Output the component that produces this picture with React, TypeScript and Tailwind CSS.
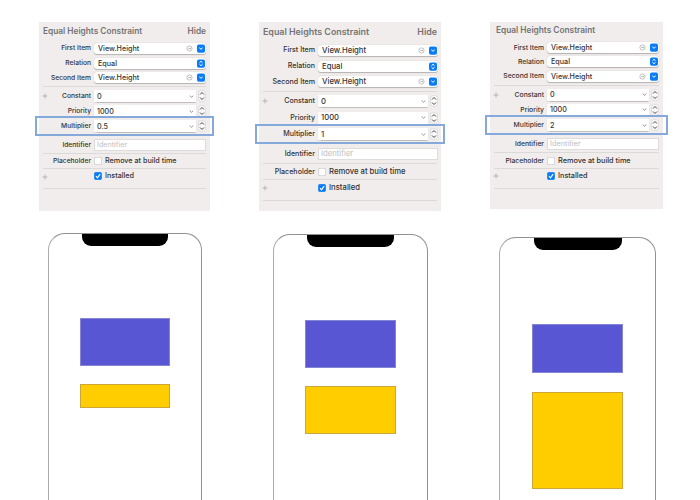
import type { ReactNode } from 'react';

type Theme = {
  panel: string;
  rows: string;
  cols: string;
  title: string;
  label: string;
  check: string;
  value: string;
  highlight: string;
  phone: string;
  notch: string;
  first: string;
  second: string;
  multiplier: string;
  hide: boolean;
};

const examples: Theme[] = [
  {
    panel: 'ml-[39px] w-[171px] h-[189px]',
    rows: 'grid-rows-[18px_16px_14px_15px_3px_16px_14px_16px_19px_1px_14px_1px_14px_5px_1px]',
    cols: 'grid-cols-[52px_112px] gap-x-[3px]',
    title: 'text-[8.3px]',
    label: 'text-[6.7px] pt-[1px]',
    check: 'text-[7.2px]',
    value: 'text-[7.2px] pt-[1px]',
    highlight: '-left-[4px] w-[179px] h-[20px]',
    phone: 'ml-[48px] mt-[22px] w-[154px] h-[267px]',
    notch: 'w-[86px]',
    first: 'mt-[84px] ml-[31px] w-[90px] h-[48px]',
    second: 'mt-[18px] ml-[31px] w-[90px] h-[24px]',
    multiplier: '0.5',
    hide: true,
  },
  {
    panel: 'ml-[19px] w-[182px] h-[189px]',
    rows: 'grid-rows-[20px_16px_16px_15px_4px_16px_17px_16px_21px_1px_15px_1px_15px_5px_1px]',
    cols: 'grid-cols-[56px_120px] gap-x-[3px]',
    title: 'text-[8.9px]',
    label: 'text-[7.1px]',
    check: 'text-[7.7px]',
    value: 'text-[7.7px] pt-[1px]',
    highlight: '-left-[4px] w-[190px] h-[20px]',
    phone: 'ml-[33px] mt-[23px] w-[155px] h-[266px]',
    notch: 'w-[87px]',
    first: 'mt-[85px] ml-[31px] w-[91px] h-[48px]',
    second: 'mt-[18px] ml-[31px] w-[91px] h-[48px]',
    multiplier: '1',
    hide: true,
  },
  {
    panel: 'ml-[20px] w-[173px] h-[187px]',
    rows: 'grid-rows-[18px_15px_13px_16px_2px_17px_13px_18px_18px_1px_15px_1px_13px_6px_1px]',
    cols: 'grid-cols-[54px_112px] gap-x-[3px]',
    title: 'text-[8.3px] -mt-[2px] ml-[2px]',
    label: 'text-[6.8px] pt-[1px]',
    check: 'text-[7.3px]',
    value: 'text-[7.2px] pt-[1px]',
    highlight: '-left-[5px] w-[183px] h-[20px]',
    phone: 'ml-[29px] mt-[28px] w-[157px] h-[263px]',
    notch: 'w-[88px]',
    first: 'mt-[86px] ml-[32px] w-[91px] h-[49px]',
    second: 'mt-[19px] ml-[32px] w-[91px] h-[97px]',
    multiplier: '2',
    hide: false,
  },
];

function Row({ t, label, plus, highlight, pad, children }: { t: Theme; label: string; plus?: boolean; highlight?: boolean; pad?: boolean; children: ReactNode }) {
  return (
    <div className={`relative grid items-center ${t.cols} ${pad ? 'pt-[2px]' : ''}`}>
      <div className={`flex items-center justify-between whitespace-nowrap pl-[3px] font-medium leading-none text-[#343233] ${t.label}`}>
        <span className="w-0">
          {plus && (
            <svg width="6" height="6" viewBox="0 0 6 6" stroke="#aaa7a8" strokeWidth=".8">
              <path d="M3 .5v5M.5 3h5" />
            </svg>
          )}
        </span>
        <span>{label}</span>
      </div>
      <div className="flex items-center">{children}</div>
      {highlight && <div className={`absolute top-1/2 -translate-y-1/2 border-2 border-[#86a9dc] ${t.highlight}`} />}
    </div>
  );
}

function Select({ t, value, stepper }: { t: Theme; value: string; stepper?: boolean }) {
  return (
    <div className="flex h-[11px] w-full items-center rounded-[3px] bg-white pl-[4px] pr-[1px] text-[#353334] shadow-[0_.5px_1px_#00000040]">
      <span className={`flex-1 font-medium leading-none ${t.value}`}>{value}</span>
      {!stepper && (
        <svg className="mr-[4px]" width="7" height="7" viewBox="0 0 7 7" fill="none" stroke="#9b999a" strokeWidth=".6">
          <circle cx="3.5" cy="3.5" r="2.6" />
          <path d="M2.2 3.5h2.6M3.9 2.7l.9.8-.9.8" />
        </svg>
      )}
      <svg width="8" height="9" viewBox="0 0 8 9" fill="none" stroke="white" strokeWidth="1">
        <rect y=".5" width="8" height="8.2" rx="1.8" fill="#0a7cf5" stroke="none" />
        <path d={stepper ? 'M2.5 3.7 4 2.3l1.5 1.4M2.5 5.3 4 6.7l1.5-1.4' : 'M2.3 3.8 4 5.3l1.7-1.5'} />
      </svg>
    </div>
  );
}

function Combo({ t, value }: { t: Theme; value: string }) {
  return (
    <>
      <div className="flex h-[12px] flex-1 items-center bg-white pl-[3px] pr-[2px] text-[#353334] shadow-[0_.5px_1px_#00000033]">
        <span className={`flex-1 font-medium leading-none ${t.value}`}>{value}</span>
        <svg width="5" height="5" viewBox="0 0 5 5" fill="none" stroke="#777" strokeWidth=".8">
          <path d="m.7 1.6 1.8 1.7 1.8-1.7" />
        </svg>
      </div>
      <svg className="ml-[2px]" width="8" height="12" viewBox="0 0 8 12" fill="none" stroke="#454344" strokeWidth="1">
        <rect x=".5" y=".5" width="7" height="11" rx="3" fill="#fbfafa" stroke="#c9c6c7" strokeWidth=".5" />
        <path d="M2 4.5 4 2.5l2 2M2 7.5l2 2 2-2" />
      </svg>
    </>
  );
}

function Check({ t, label, checked }: { t: Theme; label: string; checked?: boolean }) {
  return (
    <div className={`flex items-center gap-[3px] whitespace-nowrap font-medium leading-none text-[#343233] ${t.check}`}>
      <svg width="8" height="8" viewBox="0 0 8 8" fill="none">
        <rect x=".3" y=".3" width="7.4" height="7.4" rx="1.8" fill={checked ? '#0a7cf5' : 'white'} stroke={checked ? '#0a7cf5' : '#bbb8b9'} strokeWidth=".6" />
        {checked && <path d="M2 4.2 3.5 5.8 6.1 2.1" stroke="white" strokeWidth="1.1" />}
      </svg>
      <span>{label}</span>
    </div>
  );
}

const Rule = () => <div className="mx-[4px] h-px self-center bg-[#dcd9d9]" />;

function Inspector({ t }: { t: Theme }) {
  return (
    <section className={`grid content-start bg-[#f0edec] ${t.panel} ${t.rows}`}>
      <div className={`flex items-center justify-between pl-[4px] pr-[4px] font-semibold leading-none text-[#757374] ${t.title}`}>
        <span>Equal Heights Constraint</span>
        {t.hide && <span>Hide</span>}
      </div>
      <Row t={t} label="First Item"><Select t={t} value="View.Height" /></Row>
      <Row t={t} label="Relation"><Select t={t} value="Equal" stepper /></Row>
      <Row t={t} label="Second Item"><Select t={t} value="View.Height" /></Row>
      <Rule />
      <Row t={t} label="Constant" plus><Combo t={t} value="0" /></Row>
      <Row t={t} label="Priority"><Combo t={t} value="1000" /></Row>
      <Row t={t} label="Multiplier" highlight><Combo t={t} value={t.multiplier} /></Row>
      <Row t={t} label="Identifier" pad>
        <div className={`flex h-[12px] w-full items-center border border-[#dedbdb] bg-white pl-[2px] leading-none text-[#c0bebf] ${t.check}`}>Identifier</div>
      </Row>
      <Rule />
      <Row t={t} label="Placeholder"><Check t={t} label="Remove at build time" /></Row>
      <Rule />
      <Row t={t} label="" plus><Check t={t} label="Installed" checked /></Row>
      <div />
      <Rule />
    </section>
  );
}

function Phone({ t }: { t: Theme }) {
  return (
    <section className={`rounded-t-[17px] border border-b-0 border-[#929292] border-l-[#acacac] bg-white ${t.phone}`}>
      <div className={`mx-auto h-[12px] rounded-b-[9px] bg-black ${t.notch}`} />
      <div className={`-translate-y-[12px] border border-[#8585d3] bg-[#5856d3] ${t.first}`} />
      <div className={`-translate-y-[12px] border border-[#cda638] bg-[#ffcd00] ${t.second}`} />
    </section>
  );
}

export default function App() {
  return (
    <main className="grid h-[500px] w-[700px] grid-cols-[240px_230px_230px] overflow-hidden bg-white pt-[22px] font-['Inter','Liberation_Sans',sans-serif]">
      {examples.map((t) => (
        <div key={t.multiplier}>
          <Inspector t={t} />
          <Phone t={t} />
        </div>
      ))}
    </main>
  );
}
